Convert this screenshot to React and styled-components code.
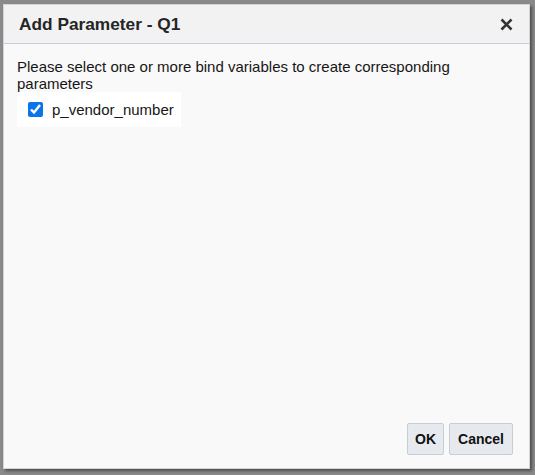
import styled, { createGlobalStyle } from 'styled-components'

const Global = createGlobalStyle`
  html, body {
    margin: 0;
    padding: 0;
    background: #8a8a8a;
    font-family: "Liberation Sans", Arial, sans-serif;
  }
`

const Page = styled.div`
  width: 535px;
  height: 475px;
  padding: 4px 0 0 3px;
  box-sizing: border-box;
`

const Dialog = styled.div`
  width: 527px;
  height: 465px;
  background: #f9f9f9;
  border: 1px solid #d0d6dc;
  box-sizing: border-box;
  box-shadow: 2px 2px 3px rgba(0, 0, 0, 0.45);
  display: flex;
  flex-direction: column;
`

const Header = styled.div`
  height: 39px;
  box-sizing: border-box;
  background: #f2f2f2;
  border-bottom: 1px solid #c4ced8;
  display: flex;
  align-items: center;
  justify-content: space-between;
  padding: 0 15px 0 15px;
`

const Title = styled.h1`
  margin: 0;
  font-size: 17.3px;
  font-weight: bold;
  color: #252525;
`

const Close = styled.button`
  border: none;
  background: none;
  padding: 0;
  width: 16px;
  height: 16px;
  display: flex;
  align-items: center;
  justify-content: center;
  cursor: pointer;
`

const Body = styled.div`
  flex: 1;
  padding: 14px 13px 0 13px;
`

const Intro = styled.p`
  margin: 0;
  font-size: 15px;
  line-height: 17px;
  color: #161616;
`

const Options = styled.div`
  display: inline-flex;
  flex-direction: column;
  background: #ffffff;
  margin-top: 0;
  padding: 9px 7px 9px 11px;
`

const Option = styled.label`
  display: flex;
  align-items: center;
  gap: 9px;
  font-size: 15px;
  line-height: 17px;
  color: #161616;
`

const Check = styled.input`
  width: 15px;
  height: 15px;
  margin: 0;
  accent-color: #0a74e8;
`

const Footer = styled.div`
  display: flex;
  justify-content: flex-end;
  gap: 5px;
  padding: 0 16px 13px 0;
`

const Button = styled.button`
  height: 32px;
  padding: 0 ${(p) => (p.$narrow ? '7px' : '8px')};
  font-family: "Liberation Sans", Arial, sans-serif;
  font-size: 14px;
  font-weight: bold;
  color: #111;
  background: #e6eaee;
  border: 1px solid #c6cdd4;
  border-radius: 2px;
`

export default function App() {
  return (
    <>
      <Global />
      <Page>
        <Dialog>
          <Header>
            <Title>Add Parameter - Q1</Title>
            <Close aria-label="Close">
              <svg width="13" height="13" viewBox="0 0 13 13">
                <path d="M1.5 1.5 L11.5 11.5 M11.5 1.5 L1.5 11.5" stroke="#333" strokeWidth="2.6" strokeLinecap="butt" />
              </svg>
            </Close>
          </Header>
          <Body>
            <Intro>Please select one or more bind variables to create corresponding parameters</Intro>
            <Options>
              <Option>
                <Check type="checkbox" defaultChecked />
                p_vendor_number
              </Option>
            </Options>
          </Body>
          <Footer>
            <Button $narrow>OK</Button>
            <Button>Cancel</Button>
          </Footer>
        </Dialog>
      </Page>
    </>
  )
}
